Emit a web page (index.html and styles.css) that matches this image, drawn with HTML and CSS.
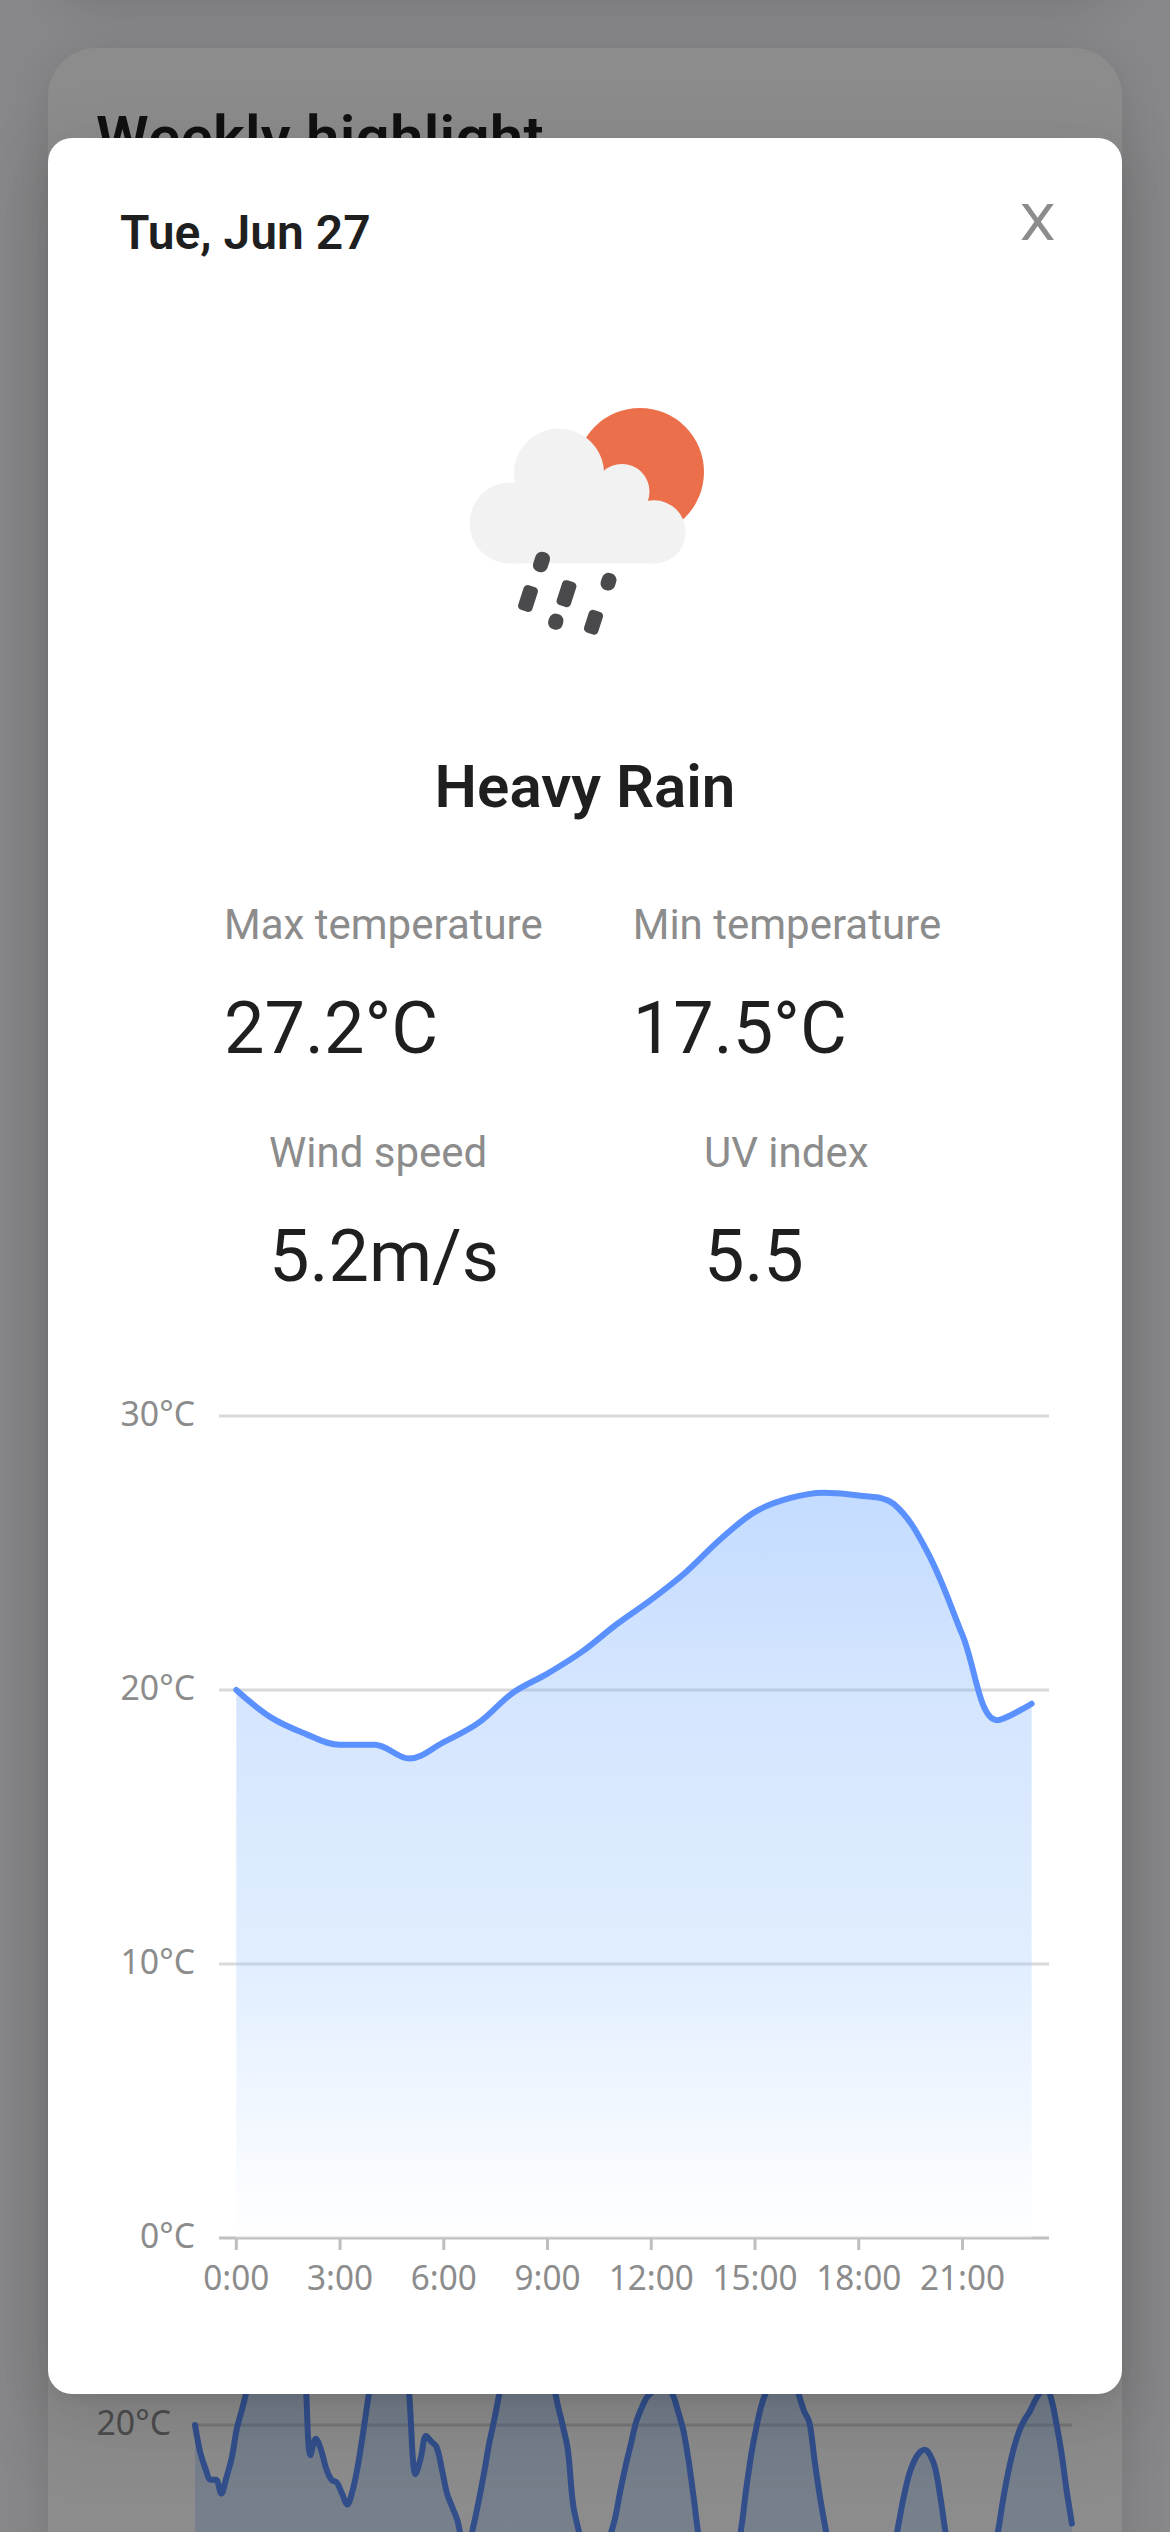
FILE: index.html
```html
<!DOCTYPE html>
<html lang="en">
<head>
<meta charset="utf-8">
<title>Weather</title>
<link rel="stylesheet" href="styles.css">
</head>
<body>
<main class="page">
  <section class="card card-previous"></section>
  <section class="card card-weekly">
    <h2 class="card-title">Weekly highlight</h2>
    <svg class="week-chart" id="week" viewBox="0 0 1074 900">
      <defs>
        <linearGradient id="weekFill" gradientUnits="userSpaceOnUse" x1="0" y1="131" x2="0" y2="875">
          <stop offset="0" stop-color="#3a8aff"/><stop offset="0.264" stop-color="#70a8fc"/><stop offset="0.632" stop-color="#9bc6ff"/><stop offset="1" stop-color="#ffffff"/>
        </linearGradient>
      </defs>
      <line class="grid" x1="147" x2="1024" y1="327" y2="327"/>
      <text class="tick-label" x="123" y="337" text-anchor="end" textLength="74.5" lengthAdjust="spacingAndGlyphs">20°C</text>
    </svg>
  </section>
</main>
<div class="mask">
  <section class="modal" role="dialog">
    <header class="modal-head">
      <h3 class="modal-title">Tue, Jun 27</h3>
      <button class="close" type="button">X</button>
    </header>
    <svg class="weather-icon" viewBox="0 0 300 280">
      <circle cx="200" cy="91" r="64" fill="#eb6f4b"/>
      <g fill="#f2f2f2">
        <circle cx="70" cy="142" r="40.5"/>
        <circle cx="119" cy="92.500" r="45"/>
        <circle cx="182" cy="110.500" r="27.500"/>
        <circle cx="214" cy="151" r="31.700"/>
        <path d="M70 182.500V102H119L182 100L210 130L214 182.500Z"/>
      </g>
      <g fill="#4a4a4c">
        <rect x="-7.500" y="-10.200" width="15" height="20.400" rx="6.500" transform="translate(101.500 181) rotate(18)"/>
        <rect x="-7.400" y="-13" width="14.800" height="26" rx="4.200" transform="translate(88 217.500) rotate(18)"/>
        <rect x="-7.400" y="-13" width="14.800" height="26" rx="4.200" transform="translate(126.500 212.700) rotate(18)"/>
        <rect x="-7.400" y="-8.800" width="14.800" height="17.600" rx="6.800" transform="translate(168.500 200.700) rotate(18)"/>
        <rect x="-7.400" y="-8" width="14.800" height="16" rx="6.800" transform="translate(115.800 240.700) rotate(18)"/>
        <rect x="-7.400" y="-11.800" width="14.800" height="23.600" rx="4.200" transform="translate(153.500 241.200) rotate(18)"/>
      </g>
    </svg>
    <h2 class="condition">Heavy Rain</h2>
    <div class="stats">
      <div class="stat-row stat-row-temp">
        <div class="stat"><div class="stat-label">Max temperature</div><div class="stat-value">27.2°C</div></div>
        <div class="stat"><div class="stat-label">Min temperature</div><div class="stat-value">17.5°C</div></div>
      </div>
      <div class="stat-row stat-row-air">
        <div class="stat"><div class="stat-label">Wind speed</div><div class="stat-value">5.2m/s</div></div>
        <div class="stat"><div class="stat-label">UV index</div><div class="stat-value">5.5</div></div>
      </div>
    </div>
    <svg class="day-chart" id="day" viewBox="0 0 1074 960">
      <defs>
        <linearGradient id="dayFill" gradientUnits="userSpaceOnUse" x1="0" y1="133" x2="0" y2="878">
          <stop offset="0" stop-color="#3a8aff"/><stop offset="0.264" stop-color="#70a8fc"/><stop offset="0.632" stop-color="#9bc6ff"/><stop offset="1" stop-color="#ffffff"/>
        </linearGradient>
      </defs>
    </svg>
  </section>
</div>
<script src="charts.js"></script>
</body>
</html>
```
FILE: styles.css
```css
* { box-sizing: border-box; }

body {
  margin: 0;
  width: 1170px;
  height: 2532px;
  overflow: hidden;
  background: #f7f7fb;
  font-family: Roboto, "Liberation Sans", sans-serif;
  color: #1f1f1f;
}

.page {
  height: 2532px;
  overflow: hidden;
  padding: 0 48px;
  display: flex;
  flex-direction: column;
  gap: 48px;
}

.card {
  flex: none;
  background: #fff;
  border-radius: 48px;
  box-shadow: 0 6px 48px rgba(0, 0, 0, 0.12);
}

.card-previous {
  height: 200px;
  margin-top: -200px;
}

.card-weekly {
  height: 3200px;
  padding-top: 48px;
}

.card-title {
  margin: 0 0 1918px;
  padding-left: 48px;
  font-size: 60px;
  line-height: 84px;
  font-weight: 600;
  letter-spacing: 0.25px;
}

.week-chart { display: block; width: 1074px; height: 900px; }

.mask {
  position: absolute;
  inset: 0;
  padding: 138px 48px;
  background: rgba(0, 0, 0, 0.45);
}

.modal {
  height: 2256px;
  display: flex;
  flex-direction: column;
  align-items: center;
  background: #fff;
  border-radius: 24px;
  box-shadow:
    0 18px 48px rgba(0, 0, 0, 0.08),
    0 9px 18px -12px rgba(0, 0, 0, 0.12),
    0 27px 84px 24px rgba(0, 0, 0, 0.05);
}

.modal-head {
  width: 100%;
  height: 243px;
  padding: 61px 69px 0 72px;
  display: flex;
  justify-content: space-between;
  align-items: flex-start;
}

.modal-title { margin: 0; font-size: 48px; line-height: 68px; font-weight: 600; }

.close {
  margin: 0;
  padding: 0;
  border: 0;
  background: none;
  font-family: Roboto, sans-serif;
  font-size: 50px;
  font-weight: 400;
  line-height: 48px;
  color: #8c8c8c;
  transform: scaleX(1.14);
}

.weather-icon { width: 300px; height: 280px; margin-left: 10px; flex: none; }

.condition { margin: 84px 0 0; font-size: 60px; line-height: 84px; font-weight: 600; }

.stats {
  width: 100%;
  margin-top: 63px;
  display: flex;
  flex-direction: column;
  gap: 34px;
}

.stat-row { display: flex; }
.stat-row-temp { padding-left: 176px; gap: 90px; }
.stat-row-air { padding-left: 221px; gap: 205px; }

.stat-label { font-size: 42px; line-height: 66px; color: #8c8c8c; }
.stat-value { margin-top: 14px; font-size: 72px; line-height: 114px; }

.day-chart { display: block; flex: none; width: 1074px; height: 960px; margin-top: 46px; }

.grid { stroke: #d9d9d9; stroke-width: 3; }
.axis { stroke: #bfbfbf; stroke-width: 3; }
.tick-label { font-family: "Noto Sans", "Open Sans", sans-serif; font-size: 35px; fill: #8c8c8c; }
.area { opacity: 0.3; }
.curve { fill: none; stroke: #5b91ff; stroke-width: 6; stroke-linecap: round; stroke-linejoin: bevel; }
```
FILE: charts.js
```javascript
const NS = "http://www.w3.org/2000/svg";

const dayTemps = [20, 19, 18.4, 18, 18, 17.5, 18.1, 18.8, 19.9, 20.6, 21.4, 22.4,
  23.3, 24.3, 25.5, 26.5, 27, 27.2, 27.1, 26.8, 25, 22, 18.9, 19.5];

const weekTemps = dayTemps.concat(
  [19.1, 18.4, 18, 17.9, 17.5, 17.1, 17.6, 18.5, 19.7, 21, 22.3, 23.5, 24.5, 25, 25.2, 25, 24.2, 20.5, 18.2, 18.8, 19.6, 19.4, 19.2, 18.4],
  [17.5, 17, 16.5, 15.7, 15.6, 16.3, 17.2, 18.2, 19.3, 20.2, 21.2, 22.4, 23.4, 24, 24.4, 24.5, 24.4, 24, 23.4, 22.6, 21.8, 20.8, 20, 19.1],
  [17.1, 16.2, 15.4, 14.7, 14.3, 14.4, 15.2, 15.9, 16.6, 17.6, 18.5, 19.3, 20.1, 20.6, 21, 21.2, 21.4, 21.5, 21.4, 21.1, 20.5, 19.8, 18.7, 17.3],
  [15.8, 14.8, 14, 13.5, 13.5, 13.8, 14.3, 15.2, 16.2, 17.7, 19, 20, 20.8, 21.3, 21.7, 22, 22.1, 22, 21.7, 21.1, 20.5, 20.1, 18.7, 17.4],
  [16.3, 15.4, 14.8, 14.3, 14, 13.8, 13.6, 13.5, 13.5, 13.6, 13.9, 14.3, 14.8, 15.4, 16.4, 17.4, 18.2, 18.7, 19, 19.1, 18.9, 18.4, 17.3, 16],
  [15, 14.2, 13.7, 13.4, 13.3, 13.4, 13.6, 14.2, 15.2, 16.2, 17.4, 18.4, 19.2, 19.8, 20.2, 20.5, 20.9, 21.2, 21.4, 21, 20.1, 19, 17.6, 16.4]
);

function clamp(v, a, b) {
  return Math.min(Math.max(v, Math.min(a, b)), Math.max(a, b));
}

// Smooth path whose control points never overshoot neighbouring values.
function smoothPath(pts) {
  let d = `M${pts[0][0]} ${pts[0][1]}`;
  let out = pts[0];
  for (let i = 1; i < pts.length; i++) {
    const p = pts[i - 1], c = pts[i], n = pts[i + 1];
    let inn = c, next = c;
    if (n) {
      const lp = Math.hypot(c[0] - p[0], c[1] - p[1]);
      const ln = Math.hypot(n[0] - c[0], n[1] - c[1]);
      const r = ln / (ln + lp);
      next = [0, 1].map(k => clamp(c[k] + (n[k] - p[k]) * 0.36 * r, c[k], n[k]));
      inn = [0, 1].map(k => clamp(c[k] - (next[k] - c[k]) * lp / ln, p[k], c[k]));
      next = [0, 1].map(k => c[k] + (c[k] - inn[k]) * ln / lp);
    }
    d += `C${out[0]} ${out[1]} ${inn[0]} ${inn[1]} ${c[0]} ${c[1]}`;
    out = next;
  }
  return d;
}

function add(svg, name, attrs, text) {
  const el = document.createElementNS(NS, name);
  for (const k in attrs) el.setAttribute(k, attrs[k]);
  if (text) el.textContent = text;
  svg.appendChild(el);
}

function label(svg, x, y, anchor, width, text) {
  add(svg, "text", { class: "tick-label", x, y, "text-anchor": anchor, textLength: width, lengthAdjust: "spacingAndGlyphs" }, text);
}

function series(svg, temps, x0, step, zero, perDegree, fill) {
  const pts = temps.map((t, i) => [x0 + i * step, zero - t * perDegree]);
  const line = smoothPath(pts);
  add(svg, "path", { class: "area", fill, d: `${line}V${zero}H${x0}Z` });
  add(svg, "path", { class: "curve", d: line });
}

const day = document.getElementById("day");
for (const t of [30, 20, 10]) {
  const y = 878 - t * 27.4;
  add(day, "line", { class: "grid", x1: 171, x2: 1001, y1: y, y2: y });
  label(day, 147, y + 9.5, "end", 74.5, t + "°C");
}
label(day, 147, 887.5, "end", 55, "0°C");
add(day, "line", { class: "axis", x1: 171, x2: 1001, y1: 878, y2: 878 });
for (let h = 0; h < 24; h += 3) {
  const x = 188.3 + h * 34.58;
  add(day, "line", { class: "axis", x1: x, x2: x, y1: 878, y2: 890 });
  label(day, x, 929.5, "middle", h < 10 ? 66 : 85, h + ":00");
}
series(day, dayTemps, 188.3, 34.58, 878, 27.4, "url(#dayFill)");

series(document.getElementById("week"), weekTemps, 147, 5.251, 875, 27.4, "url(#weekFill)");
```
